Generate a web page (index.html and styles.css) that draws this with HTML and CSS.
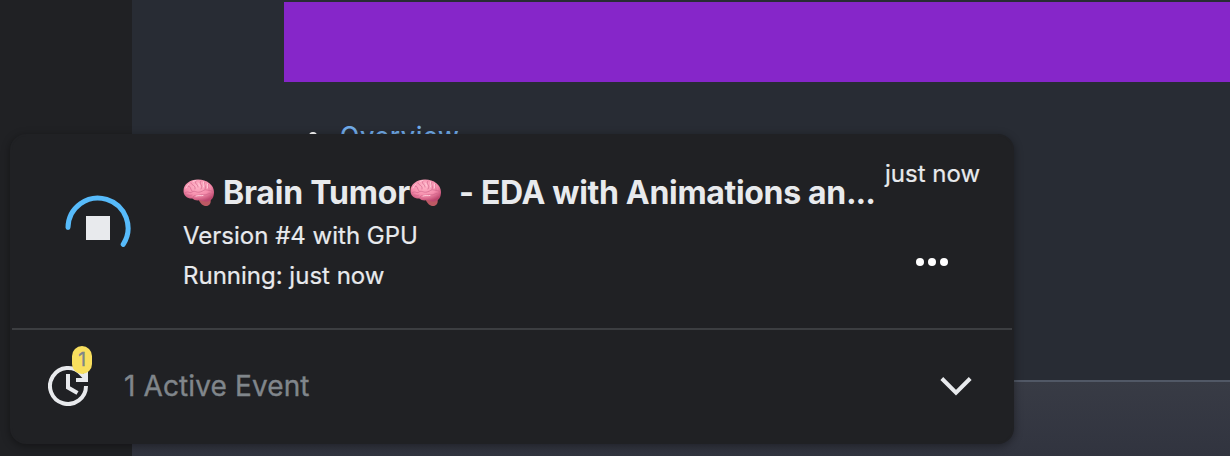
FILE: index.html
```html
<!DOCTYPE html>
<html lang="en">
<head>
<meta charset="utf-8">
<title>Active Events</title>
<link rel="stylesheet" href="styles.css">
</head>
<body>
<svg class="defs" width="0" height="0" aria-hidden="true">
  <defs>
    <radialGradient id="pink" cx="45%" cy="30%" r="70%">
      <stop offset="0" stop-color="#ffb5c8"/><stop offset=".6" stop-color="#f58dac"/><stop offset="1" stop-color="#bd486f"/>
    </radialGradient>
    <symbol id="brain" viewBox="0 0 32 28">
      <path d="M15 19.500c2 5 5 7.500 8 7.500s5.500-2.500 4.500-6.500z" fill="#bd5964"/>
      <path d="M.5 12C.5 5 7 .5 15 .5 24 .5 31 6 31 13c0 5-2 8.500-6 9.500-3 .5-6-.5-8-1.500-2 1-6 .5-7.500-1.500C5 20 .5 17 .5 12z" fill="url(#pink)"/>
      <path d="M2 14c3-3 4 1 7-1s4 1 8 0 4-3 7-2 5 0 6 2M10 19c0-4 4-2 7-3s5 1 8-1 3 2 4 2M5 7c3 0 2 3 4 5M8 4c1 3 5 2 4 6M13 2c-2 3 2 3 2 6M18 2c-3 3 3 4 0 8M22 3c-2 3 2 4 0 7M26 5c-3 2 1 3 0 6M4 16c2 0 3 1 5 0" fill="none" stroke="#d0668b" stroke-width=".7" stroke-linecap="round"/>
      <path d="M3 9c1-2 2-3 3-4M10 2.500c1-.6 2-.8 3-1M15.500 4c1 1 .5 2 1 3M20.500 3c0 2 1 3 0 5M24.500 5c-1 2 1 2 0 4M13 17c3-1 5 0 7-.5" fill="none" stroke="#ffd0dc" stroke-width=".9" stroke-linecap="round"/>
    </symbol>
  </defs>
</svg>
<div class="page">
  <aside class="rail"></aside>
  <main class="notebook">
    <section class="cell">
      <div class="banner"></div>
      <ul class="toc"><li><span class="bullet"></span><a class="toc-link">Overview</a></li></ul>
    </section>
    <section class="cell-footer"></section>
  </main>
</div>
<div class="card">
  <div class="event">
    <svg class="spinner" width="68" height="68" viewBox="0 0 68 68">
      <path d="M4 33.500A30 30 0 1 1 59.200 50.300" fill="none" stroke="#57bbfb" stroke-width="5" stroke-linecap="round"/>
      <rect x="22" y="22" width="24" height="24" fill="#e8eaed"/>
    </svg>
    <div class="details">
      <div class="title"><svg class="brain"><use href="#brain"/></svg><span class="name">Brain Tumor</span><svg class="brain"><use href="#brain"/></svg><span class="rest">- EDA with Animations an<span class="ellipsis">...</span></span></div>
      <div class="line">Version #4 with GPU</div>
      <div class="line">Running: just now</div>
    </div>
    <div class="side">
      <div class="time">just now</div>
      <svg class="dots" width="32" height="8" viewBox="0 0 32 8" fill="#fff"><circle cx="4" cy="4" r="4"/><circle cx="16" cy="4" r="4"/><circle cx="28" cy="4" r="4"/></svg>
    </div>
  </div>
  <div class="summary">
    <div class="history">
      <svg width="40" height="40" viewBox="0 0 40 40" fill="none" stroke="#e8eaed">
        <path d="M38 20A18 18 0 1 1 33.500 8.100L38 13" stroke-width="4"/>
        <path d="M20 8V21.500L29.500 27" stroke-width="4"/>
        <path d="M28 14H38V4" stroke-width="4"/>
      </svg>
      <span class="badge">1</span>
    </div>
    <span class="count">1 Active Event</span>
    <svg class="chevron" width="32" height="20" viewBox="0 0 32 20"><path d="M1.800 2.500L16 16.700L30.200 2.500" fill="none" stroke="#e8eaed" stroke-width="4"/></svg>
  </div>
</div>
</body>
</html>
```
FILE: styles.css
```css
* { box-sizing: border-box; }
body { margin: 0; width: 1230px; height: 456px; overflow: hidden; position: relative; background: #202124; color: #e8eaed; font-family: Inter, "Liberation Sans", sans-serif; }
svg { display: block; flex: none; }
.defs { position: absolute; }
.page { display: flex; height: 456px; }
.rail { width: 132px; background: #202124; }
.notebook { flex: 1; display: flex; flex-direction: column; background: #282c34; }
.cell { height: 380px; padding: 2px 0 0 152px; }
.banner { height: 80px; background: #8626c9; }
.toc { list-style: none; margin: 36px 0 0; padding: 0 0 0 25px; }
.toc li { display: flex; align-items: center; height: 36px; }
.bullet { width: 8px; height: 8px; border-radius: 50%; background: #fff; margin-right: 23px; }
.toc-link { color: #70aae8; font-size: 25px; font-weight: 500; line-height: 36px; letter-spacing: .75px; }
.cell-footer { flex: 1; border-top: 2px solid #515866; background: linear-gradient(#383b45, #31343f); }
.card { position: absolute; left: 10px; top: 134px; width: 1004px; height: 310px; border: 2px solid #202124; border-radius: 16px; background: #202124; box-shadow: 0 2px 8px rgba(0,0,0,.4); }
.event { display: flex; height: 194px; border-bottom: 2px solid #3c3e41; }
.spinner { margin: 58px 0 0 52px; }
.details { margin: 37px 0 0 51px; width: 702px; }
.title { display: flex; align-items: center; height: 40px; font-size: 32px; line-height: 40px; font-weight: 700; white-space: nowrap; }
.brain { width: 32px; height: 28px; margin-bottom: 1px; }
.name { width: 187px; margin-left: 8px; letter-spacing: -.2px; }
.rest { margin-left: 17px; letter-spacing: -.32px; }
.ellipsis { letter-spacing: -1px; }
.line { font-size: 24px; line-height: 40px; height: 40px; padding-top: 3px; white-space: nowrap; -webkit-text-stroke: .2px; }
.side { width: 98px; }
.time { margin-top: 22px; font-size: 24px; line-height: 32px; white-space: nowrap; -webkit-text-stroke: .2px; }
.dots { margin: 68px 0 0 31px; }
.summary { display: flex; align-items: center; height: 112px; padding: 0 40px 0 36px; }
.history { position: relative; width: 40px; height: 40px; }
.badge { position: absolute; left: 24px; top: -20px; width: 20px; height: 28px; border-radius: 10px; background: #f8df5e; color: #80868b; font-size: 19px; line-height: 27px; text-align: center; -webkit-text-stroke: .4px; }
.count { margin-left: 36px; color: #80868b; font-size: 28px; line-height: 36px; letter-spacing: .12px; -webkit-text-stroke: .35px; }
.chevron { margin-left: auto; }
```
